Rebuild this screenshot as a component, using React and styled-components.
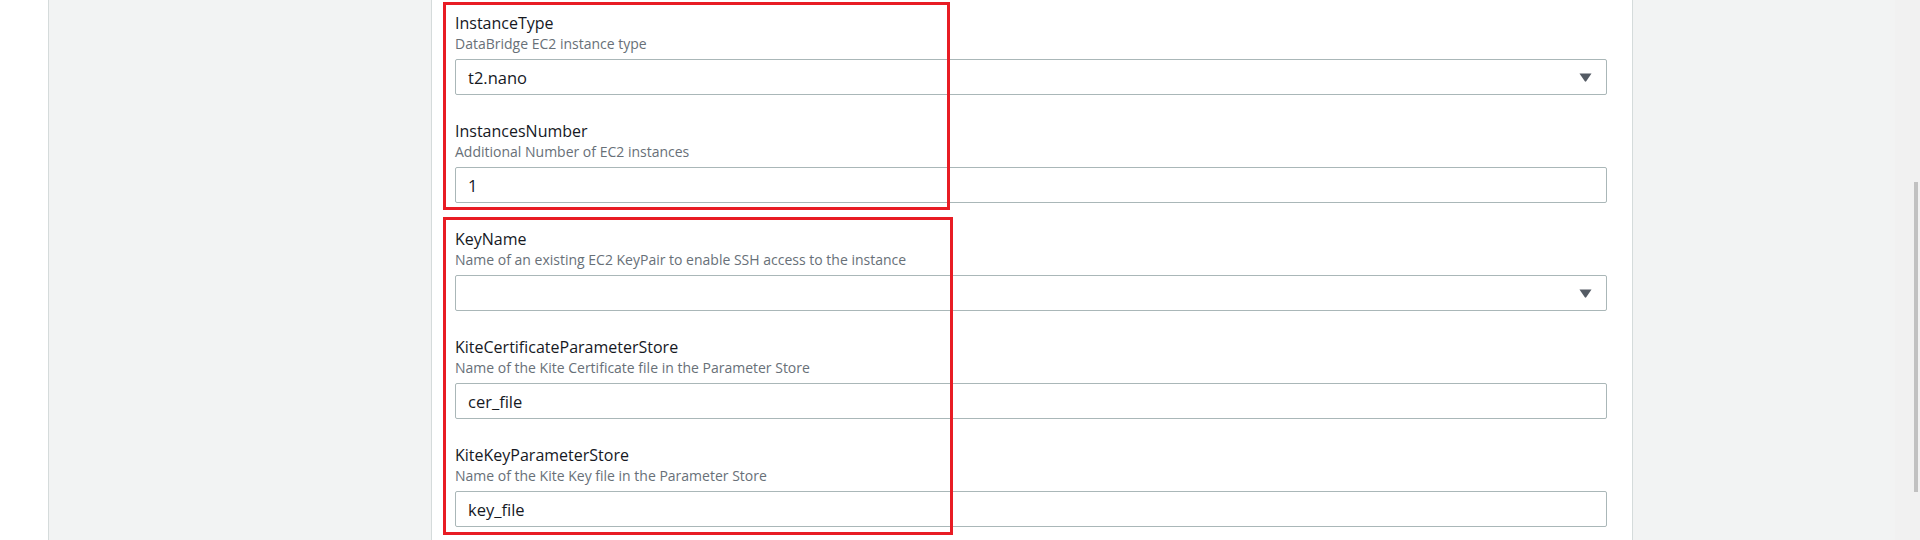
import React from 'react';
import styled, { createGlobalStyle } from 'styled-components';

const GlobalStyle = createGlobalStyle`
	html, body {
		margin: 0;
		padding: 0;
		background: #ffffff;
	}
	body {
		font-family: "Open Sans", "Noto Sans", sans-serif;
		color: #16191f;
	}
`;

const Page = styled.div`
	display: flex;
	width: 1920px;
	height: 540px;
	overflow: hidden;
`;

const Gutter = styled.div`
	width: 48px;
	flex: none;
	background: #ffffff;
	border-right: 1px solid #d5dbdb;
`;

const Canvas = styled.div`
	flex: 1;
	display: flex;
	background: #f2f3f3;
	padding-left: 382px;
`;

const Panel = styled.div`
	width: 1202px;
	flex: none;
	box-sizing: border-box;
	background: #ffffff;
	border-left: 1px solid #d5dbdb;
	border-right: 1px solid #d5dbdb;
	padding: 12px 25px 0 23px;
`;

const Form = styled.div`
	display: flex;
	flex-direction: column;
	gap: 25px;
`;

const Group = styled.div`
	position: relative;
	display: flex;
	flex-direction: column;
	gap: 25px;

	/* red annotation frame drawn over the fields */
	&::after {
		content: "";
		position: absolute;
		left: -12px;
		top: ${p => -p.$above}px;
		bottom: ${p => -p.$below}px;
		width: ${p => p.$frame}px;
		border: 3px solid #e81c24;
		box-sizing: border-box;
		pointer-events: none;
	}
`;

const Field = styled.div`
	display: flex;
	flex-direction: column;
`;

const Label = styled.div`
	font-size: 16px;
	line-height: 22px;
	color: #16191f;
`;

const Description = styled.div`
	margin-top: 1px;
	font-size: 14px;
	line-height: 18px;
	color: #687078;
`;

const Input = styled.input`
	margin-top: 6px;
	height: 36px;
	box-sizing: border-box;
	width: 100%;
	border: 1px solid #aab7b8;
	border-radius: 2px;
	padding: 0 12px;
	font-family: "Open Sans", "Noto Sans", sans-serif;
	font-size: 16.5px;
	color: #16191f;
	background: #ffffff;
	outline: none;
`;

const Select = styled.div`
	margin-top: 6px;
	height: 36px;
	box-sizing: border-box;
	border: 1px solid #aab7b8;
	border-radius: 2px;
	padding: 0 14px 0 12px;
	display: flex;
	align-items: center;
	justify-content: space-between;
	font-size: 16.5px;
	color: #16191f;
	background: #ffffff;
`;

const Caret = styled.svg`
	width: 13px;
	height: 9px;
	flex: none;
	fill: #545b64;
`;

const Track = styled.div`
	width: 25px;
	flex: none;
	background: #f1f1f1;
	display: flex;
	justify-content: flex-end;
	padding: 182px 2px 0 0;
	box-sizing: border-box;
`;

const Thumb = styled.div`
	width: 4px;
	height: 310px;
	background: #c1c1c1;
`;

const groups = [
	{
		frame: 507, above: 10, below: 7,
		fields: [
			{ label: 'InstanceType', desc: 'DataBridge EC2 instance type', value: 't2.nano', select: true },
			{ label: 'InstancesNumber', desc: 'Additional Number of EC2 instances', value: '1' },
		],
	},
	{
		frame: 510, above: 11, below: 8,
		fields: [
			{ label: 'KeyName', desc: 'Name of an existing EC2 KeyPair to enable SSH access to the instance', value: '', select: true },
			{ label: 'KiteCertificateParameterStore', desc: 'Name of the Kite Certificate file in the Parameter Store', value: 'cer_file' },
			{ label: 'KiteKeyParameterStore', desc: 'Name of the Kite Key file in the Parameter Store', value: 'key_file' },
		],
	},
];

const App = () => {
	return (
		<>
			<GlobalStyle />
			<Page>
				<Gutter />
				<Canvas>
					<Panel>
						<Form>
							{groups.map((g, i) => (
								<Group key={i} $frame={g.frame} $above={g.above} $below={g.below}>
									{g.fields.map(f => (
										<Field key={f.label}>
											<Label>{f.label}</Label>
											<Description>{f.desc}</Description>
											{f.select ? (
												<Select>
													<span>{f.value}</span>
													<Caret viewBox="0 0 13 9">
														<path d="M0.5 0.5 H12.5 L7.2 8.3 Q6.5 9 5.8 8.3 Z" />
													</Caret>
												</Select>
											) : (
												<Input value={f.value} readOnly />
											)}
										</Field>
									))}
								</Group>
							))}
						</Form>
					</Panel>
				</Canvas>
				<Track>
					<Thumb />
				</Track>
			</Page>
		</>
	);
};

export default App;
